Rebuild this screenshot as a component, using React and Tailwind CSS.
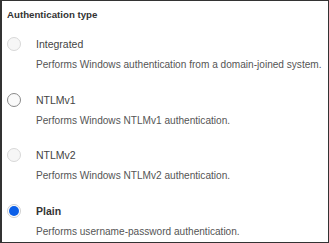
import React, { useState } from "react";

const options = [
    { id: "integrated", label: "Integrated", desc: "Performs Windows authentication from a domain-joined system.", disabled: true },
    { id: "ntlmv1", label: "NTLMv1", desc: "Performs Windows NTLMv1 authentication.", disabled: false },
    { id: "ntlmv2", label: "NTLMv2", desc: "Performs Windows NTLMv2 authentication.", disabled: true },
    { id: "plain", label: "Plain", desc: "Performs username-password authentication.", disabled: false },
];

function Radio({ checked, disabled }) {
    if (checked) {
        return (
            <div className="flex h-[14px] w-[14px] items-center justify-center rounded-full border border-[#d0d0d0] bg-white">
                <div className="h-[10px] w-[10px] rounded-full bg-[#0b5fe8]" />
            </div>
        );
    }
    return (
        <div
            className={
                disabled
                    ? "h-[14px] w-[14px] rounded-full border border-[#d8d8d8] bg-[#f6f6f6]"
                    : "h-[14px] w-[14px] rounded-full border border-[#8a8a8a] bg-[#fafafa]"
            }
        />
    );
}

export default function App() {
    const [selected, setSelected] = useState("plain");

    return (
        <div className="h-[243px] w-[329px] overflow-hidden border border-l-2 border-[#333] bg-white font-['Liberation_Sans',Arial,sans-serif]">
            <h2 className="pl-[5px] pt-[8px] text-[9.7px] font-bold leading-[12px] text-[#333]">
                Authentication type
            </h2>
            <div className="mt-[16px] flex flex-col">
                {options.map((o) => (
                    <div
                        key={o.id}
                        className="flex h-[55.5px] cursor-pointer items-start"
                        onClick={() => !o.disabled && setSelected(o.id)}
                    >
                        <div className="w-[34px] shrink-0 pl-[5px]">
                            <Radio checked={selected === o.id} disabled={o.disabled} />
                        </div>
                        <div className="flex flex-col whitespace-nowrap">
                            <span
                                className={
                                    selected === o.id
                                        ? "text-[10.5px] font-bold leading-[15px] text-[#333]"
                                        : "text-[10.5px] leading-[15px] text-[#444]"
                                }
                            >
                                {o.label}
                            </span>
                            <span className="mt-[6px] text-[10.1px] leading-[13px] text-[#555]">
                                {o.desc}
                            </span>
                        </div>
                    </div>
                ))}
            </div>
        </div>
    );
}
